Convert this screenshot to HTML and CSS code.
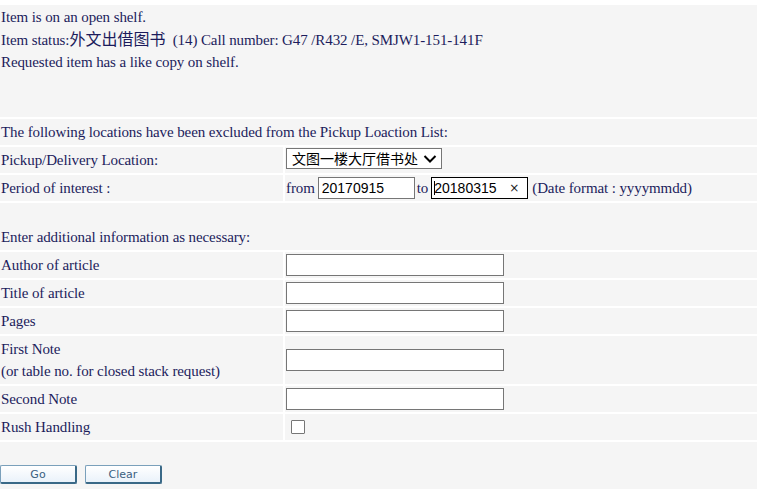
FILE: index.html
```html
<!DOCTYPE html>
<html lang="en">
<head>
    <meta charset="UTF-8">
    <title>Request Item</title>
    <link rel="stylesheet" href="styles.css">
</head>
<body>

    <div class="page">
        <!-- Item status -->
        <div class="panel status">
            <div>Item is on an open shelf.</div>
            <div>Item status:<span class="cjk">外文出借图书</span>&nbsp;&nbsp;(14) Call number: G47 /R432 /E, SMJW1-151-141F</div>
            <div>Requested item has a like copy on shelf.</div>
        </div>

        <div class="panel line">The following locations have been excluded from the Pickup Loaction List:</div>

        <div class="row">
            <div class="cell">Pickup/Delivery Location:</div>
            <div class="cell">
                <span class="select-wrap">
                    <select class="pickup">
                        <option>文图一楼大厅借书处</option>
                    </select>
                    <svg class="chevron" width="14" height="10" viewBox="0 0 14 10"><path d="M1.5 2 L7 7.5 L12.5 2" fill="none" stroke="#000" stroke-width="2"/></svg>
                </span>
            </div>
        </div>

        <div class="row">
            <div class="cell">Period of interest :</div>
            <div class="cell">
                from <input type="text" class="date" value="20170915">
                to <span class="date-box"><span class="caret"></span><input type="text" class="date-inner" value="20180315"><span class="clear-x">×</span></span>
                (Date format : yyyymmdd)
            </div>
        </div>

        <div class="panel line tall">Enter additional information as necessary:</div>

        <div class="row">
            <div class="cell">Author of article</div>
            <div class="cell"><input type="text" class="field"></div>
        </div>
        <div class="row">
            <div class="cell">Title of article</div>
            <div class="cell"><input type="text" class="field"></div>
        </div>
        <div class="row">
            <div class="cell">Pages</div>
            <div class="cell"><input type="text" class="field"></div>
        </div>
        <div class="row">
            <div class="cell">First Note<br>(or table no. for closed stack request)</div>
            <div class="cell"><input type="text" class="field"></div>
        </div>
        <div class="row">
            <div class="cell">Second Note</div>
            <div class="cell"><input type="text" class="field"></div>
        </div>
        <div class="row">
            <div class="cell">Rush Handling</div>
            <div class="cell"><input type="checkbox" class="check"></div>
        </div>

        <!-- Buttons -->
        <div class="panel actions">
            <button class="btn">Go</button>
            <button class="btn">Clear</button>
        </div>
    </div>

</body>
</html>
```

FILE: styles.css
```css
/* General */
* { box-sizing: border-box; }
body { margin: 0; background: #fff; color: #1c1c5c;
    font-family: "Liberation Serif", "Noto Sans CJK SC", serif; font-size: 15px; line-height: 22px;
    letter-spacing: -0.1px; }

.page { display: flex; flex-direction: column; gap: 2px; padding-top: 5px; }

/* Panels and rows */
.panel { background: #f5f5f5; padding: 2px 1px; }
.status { height: 112px; padding-top: 1px; line-height: 22.5px; }
.status div { white-space: nowrap; }
.cjk { font-size: 16px; letter-spacing: 0; }
.line { height: 26px; }
.tall { height: 47px; padding-top: 23px; }

.row { display: grid; grid-template-columns: 283px 1fr; gap: 2px; }
.cell { background: #f5f5f5; padding: 2px 1px; display: flex; align-items: center; min-height: 26px; white-space: nowrap; }
.row .cell:first-child { display: block; align-self: stretch; }

/* Select */
.select-wrap { position: relative; display: inline-block; margin-top: -2px; }
.pickup { appearance: none; -webkit-appearance: none; width: 156px; height: 21px; margin: 0;
    border: 1px solid #767676; border-radius: 0; background: #fff; color: #000;
    font-family: "Noto Sans CJK SC", sans-serif; font-size: 14px; padding: 0 0 0 5px; line-height: 19px; }
.chevron { position: absolute; right: 5px; top: 6px; pointer-events: none; }

/* Date fields */
.date, .date-box { width: 97px; height: 22px; border: 1px solid #767676; background: #fff; }
.date { margin: 0 2px 0 3px; padding: 0 3px; font-family: "Liberation Sans", Arial, sans-serif;
    font-size: 14px; color: #000; }
.date-box { position: relative; display: inline-flex; align-items: center; margin: 0 4px 0 3px;
    border-color: #000; }
.date-inner { border: none; outline: none; width: 72px; padding: 0 0 0 2px; height: 20px; background: transparent;
    font-family: "Liberation Sans", Arial, sans-serif; font-size: 14px; color: #000; }
.caret { position: absolute; left: 2px; top: 3px; width: 1px; height: 14px; background: #000; }
.clear-x { font-family: "DejaVu Sans", sans-serif; font-size: 12px; color: #222; margin-left: 5px; }

/* Text fields */
.field { width: 218px; height: 22px; margin: 0; border: 1px solid #767676; background: #fff;
    padding: 0 3px; font-size: 14px; }
.check { appearance: none; -webkit-appearance: none; width: 14px; height: 14px; margin: 0 0 0 5px;
    border: 1px solid #767676; background: #fff; border-radius: 1px; }

/* Buttons */
.actions { height: 47px; padding: 23px 0 0 0; display: flex; gap: 8px; align-items: flex-start; }
.btn { width: 77px; height: 19px; padding: 0; border: 1px solid #7aa0bb; border-right: 2px solid #3a6987;
    border-bottom: 2px solid #3a6987; border-radius: 2px; background: linear-gradient(#ffffff, #eaf2fa);
    font-family: "DejaVu Sans", Verdana, sans-serif; font-size: 11px; color: #3a6080; line-height: 15px;
    letter-spacing: 0; }
```
